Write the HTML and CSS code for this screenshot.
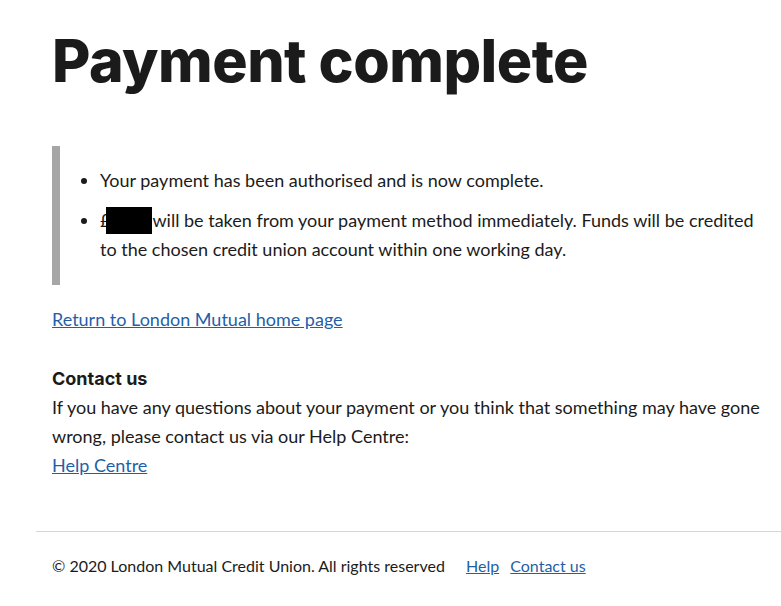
FILE: index.html
```html
<!DOCTYPE html>
<html>
  <head>
    <title>Payment complete</title>
    <meta name="viewport" content="width=device-width, initial-scale=1.0" />
    <link rel="stylesheet" href="styles.css">
  </head>
  <body>
    <main class="page">
      <h1>Payment complete</h1>

      <div class="inset">
        <ul>
          <li>Your payment has been authorised and is now complete.</li>
          <li>
            £<span class="redact"></span>will be taken from your payment method immediately.
            Funds will be credited to the chosen credit union account within one working day.
          </li>
        </ul>
      </div>

      <p class="back"><a href="#">Return to London Mutual home page</a></p>

      <h4>Contact us</h4>
      <p class="contact">
        If you have any questions about your payment or you think that something may have gone
        wrong, please contact us via our Help Centre:<br />
        <a href="#">Help Centre</a>
      </p>
    </main>

    <footer>
      <span class="copy">© 2020 London Mutual Credit Union. All rights reserved</span>
      <a href="#">Help</a>
      <a href="#">Contact us</a>
    </footer>
  </body>
</html>
```

FILE: styles.css
```css
body {
  margin: 0;
  font-family: Lato, "Open Sans", sans-serif;
  font-size: 18px;
  line-height: 29px;
  color: #1b1b1b;
}

a {
  color: #1f5fa8;
}

.page {
  padding: 0 16px 0 52px;
}

h1 {
  font-family: Inter, sans-serif;
  font-weight: 800;
  font-size: 59px;
  line-height: 70px;
  letter-spacing: -0.5px;
  margin: 26px 0 50px;
  color: #1b1b1b;
}

.inset {
  border-left: 8px solid #a6a6a6;
  padding: 20px 0 21px 20px;
}

ul {
  margin: 0;
  padding: 0 0 0 20px;
}

li {
  margin-bottom: 11px;
}

li:last-child {
  margin-bottom: 0;
}

.redact {
  display: inline-block;
  width: 46px;
  height: 27px;
  margin-left: -4px;
  background: #000;
  vertical-align: -7px;
}

.back {
  margin: 20px 0 0;
}

h4 {
  font-family: Inter, sans-serif;
  font-weight: 700;
  font-size: 18px;
  margin: 30px 0 0;
  line-height: 29px;
}

.contact {
  margin: 0;
}

footer {
  margin: 51px 0 0 36px;
  border-top: 1px solid #d6d6d6;
  padding: 19px 16px 20px 16px;
  font-size: 16px;
}

footer .copy {
  margin-right: 17px;
}

footer a {
  margin-right: 7px;
}
```
